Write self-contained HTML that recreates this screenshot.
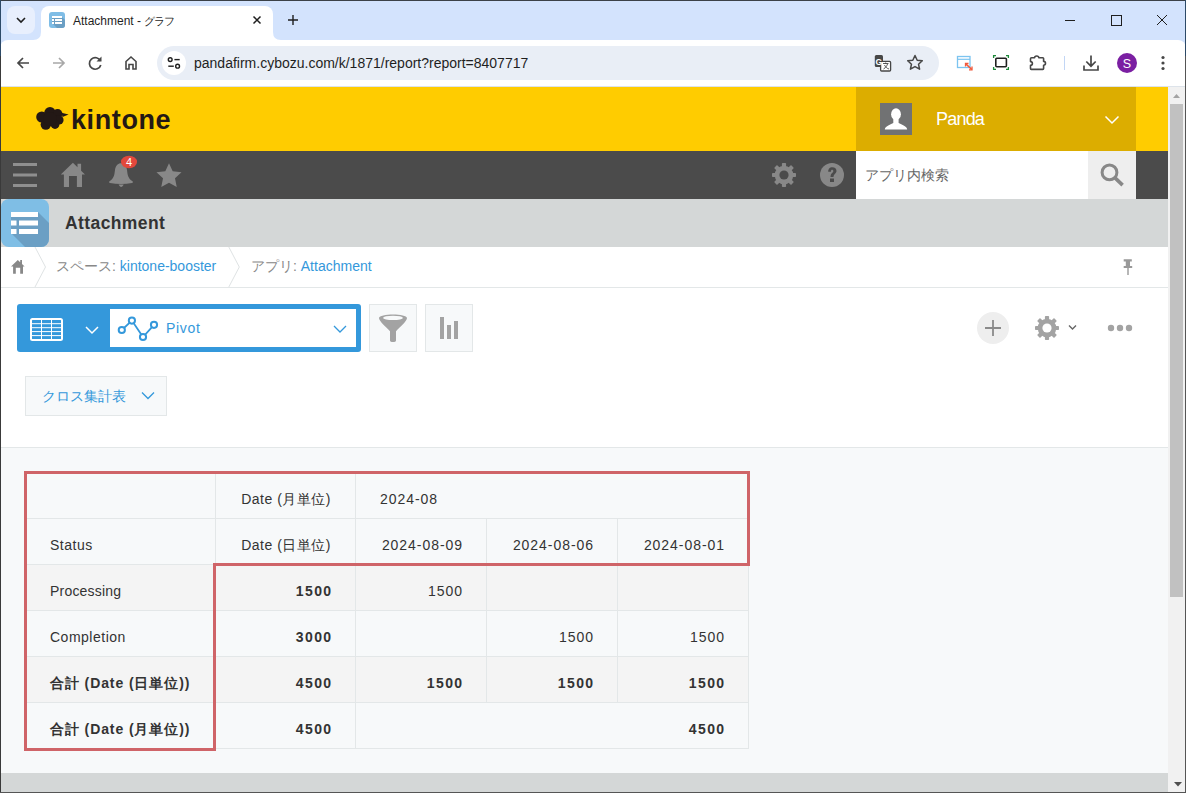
<!DOCTYPE html>
<html><head><meta charset="utf-8">
<style>
*{box-sizing:border-box;margin:0;padding:0}
html,body{width:1186px;height:793px;overflow:hidden;background:#fff;font-family:"Liberation Sans",sans-serif;color:#333}
.a{position:absolute}
svg{position:absolute;overflow:visible}
.tt{font-size:14px;line-height:46px;height:46px;margin-top:4px;letter-spacing:0.5px;color:#333;white-space:nowrap;padding-right:24px}
.b{font-weight:bold}
.n{letter-spacing:0.95px;padding-right:23px}
.b.n{letter-spacing:1.35px;padding-right:22.6px}
.j{letter-spacing:0.9px}
</style></head><body>
<!-- ===== Chrome tab strip ===== -->
<div class="a" style="left:0;top:0;width:1186px;height:48px;background:#d3e3fd"></div>
<div class="a" style="left:7px;top:6px;width:28px;height:28px;border-radius:8px;background:#e8effd"></div>
<svg style="left:0;top:0" width="1186" height="40">
  <path d="M17 18 L21 22 L25 18" fill="none" stroke="#1f1f1f" stroke-width="1.6"/>
</svg>
<!-- active tab -->
<div class="a" style="left:41px;top:6px;width:232px;height:34px;background:#fff;border-radius:8px 8px 0 0"></div>
<svg style="left:0;top:0" width="300" height="41">
  <path d="M33 40 Q41 40 41 32 L41 40 Z" fill="#fff"/>
  <path d="M281 40 Q273 40 273 32 L273 40 Z" fill="#fff"/>
</svg>
<div class="a" style="left:49px;top:12px;width:16px;height:16px;border-radius:3px;background:#7fbde6;overflow:hidden">
  <svg style="left:0;top:0" width="16" height="16"><path d="M3 5 L13 5 L16 8 L16 16 L8 16 L3 11 Z" fill="#6b9fc4"/></svg>
  <div class="a" style="left:3px;top:4px;width:10px;height:2px;background:#fff"></div>
  <div class="a" style="left:3px;top:7px;width:2px;height:2px;background:#fff"></div>
  <div class="a" style="left:6px;top:7px;width:7px;height:2px;background:#fff"></div>
  <div class="a" style="left:3px;top:10px;width:2px;height:2px;background:#fff"></div>
  <div class="a" style="left:6px;top:10px;width:7px;height:2px;background:#fff"></div>
</div>
<div class="a" style="left:73px;top:14px;font-size:12px;line-height:15px;color:#1f1f1f;white-space:nowrap">Attachment - <span style="letter-spacing:-1.2px;font-size:11px">グラフ</span></div>
<svg style="left:0;top:0" width="1186" height="40">
  <path d="M253.5 16.5 L260.5 23.5 M260.5 16.5 L253.5 23.5" stroke="#1f1f1f" stroke-width="1.5"/>
  <path d="M288 20 H298 M293 15 V25" stroke="#1f1f1f" stroke-width="1.4"/>
  <path d="M1065 20.5 H1075" stroke="#1f1f1f" stroke-width="1"/>
  <rect x="1111.5" y="15.5" width="10" height="10" fill="none" stroke="#1f1f1f" stroke-width="1"/>
  <path d="M1157 15 L1167 25 M1167 15 L1157 25" stroke="#1f1f1f" stroke-width="1"/>
</svg>
<!-- ===== Chrome toolbar ===== -->
<div class="a" style="left:0;top:40px;width:1186px;height:47px;background:#fff;border-radius:8px 8px 0 0;border-bottom:1px solid #dde3ea"></div>
<div class="a" style="left:157px;top:46px;width:782px;height:34px;border-radius:17px;background:#e9eef6"></div>
<div class="a" style="left:162px;top:51px;width:24px;height:24px;border-radius:12px;background:#fff"></div>
<div class="a" style="left:194px;top:55px;font-size:14px;line-height:16px;color:#1f1f1f;white-space:nowrap">pandafirm.cybozu.com/k/1871/report?report=8407717</div>
<svg style="left:0;top:40px" width="1186" height="47">
  <!-- back -->
  <path d="M29 23 H18 M23 18 L18 23 L23 28" fill="none" stroke="#474747" stroke-width="1.7"/>
  <!-- forward -->
  <path d="M53 23 H64 M59 18 L64 23 L59 28" fill="none" stroke="#a8a8a8" stroke-width="1.7"/>
  <!-- reload -->
  <path d="M100.5 21 A5.8 5.8 0 1 0 100.8 25" fill="none" stroke="#474747" stroke-width="1.7"/>
  <path d="M101.5 16.5 V21.5 H96.5 Z" fill="#474747"/>
  <!-- home -->
  <path d="M126 29 V21.5 L131 17 L136 21.5 V29 H133 V24.5 H129 V29 Z" fill="none" stroke="#474747" stroke-width="1.6" stroke-linejoin="miter"/>
  <!-- site info -->
  <circle cx="170.2" cy="19.6" r="1.9" fill="none" stroke="#1f1f1f" stroke-width="1.4"/>
  <path d="M174.4 19.6 H179.7" stroke="#1f1f1f" stroke-width="1.4"/>
  <circle cx="177.6" cy="26.2" r="1.9" fill="none" stroke="#1f1f1f" stroke-width="1.4"/>
  <path d="M168.3 26.2 H173.8" stroke="#1f1f1f" stroke-width="1.4"/>
  <!-- translate -->
  <rect x="874.8" y="15" width="8.2" height="12" rx="1.5" fill="#474747"/>
  <rect x="880.6" y="21.4" width="10" height="9.6" rx="1" fill="#fff" stroke="#474747" stroke-width="1.3"/>
  <text x="875.6" y="24.6" font-size="8.5" font-weight="bold" fill="#fff" font-family="Liberation Sans">G</text>
  <path d="M883 23.5 H888.5 M885.7 22.5 V24 M883.5 29 C886 27.5 887 25.5 887.5 24 M884.5 25 C885.5 27 887 28.5 889 29" fill="none" stroke="#474747" stroke-width="0.9"/>
  <!-- star -->
  <path d="M915 15.5 L917.2 20.3 L922.3 20.8 L918.5 24.2 L919.6 29.2 L915 26.6 L910.4 29.2 L911.5 24.2 L907.7 20.8 L912.8 20.3 Z" fill="none" stroke="#474747" stroke-width="1.5" stroke-linejoin="round"/>
  <!-- ext 1 -->
  <rect x="957.5" y="16.5" width="12.5" height="11" fill="#fff" stroke="#7cc4f0" stroke-width="1.3"/>
  <path d="M957.5 19.3 H970" stroke="#7cc4f0" stroke-width="1.2"/>
  <path d="M965.8 23.8 L971.8 29.5" stroke="#f05a3c" stroke-width="1.6"/>
  <path d="M965.5 26.5 V23.5 H968.5 M972 26.5 V29.8 H969" fill="none" stroke="#f05a3c" stroke-width="1.3"/>
  <!-- ext 2 -->
  <rect x="995.8" y="18.2" width="10.6" height="8.6" rx="1" fill="none" stroke="#1f1f1f" stroke-width="1.6"/>
  <path d="M993.6 18 V15.6 H996 M1006 15.6 H1008.4 V18 M1008.4 27 V29.4 H1006 M996 29.4 H993.6 V27" fill="none" stroke="#1e8a3a" stroke-width="1.3"/>
  <!-- puzzle -->
  <path d="M1031.5 17.8 H1034.6 A2.1 1.8 0 0 1 1038.8 17.8 H1042.8 A0.8 0.8 0 0 1 1043.6 18.6 V21.4 A1.9 1.9 0 0 1 1043.6 25.2 V28.6 A0.8 0.8 0 0 1 1042.8 29.4 H1031.3 A0.8 0.8 0 0 1 1030.5 28.6 V25.4 A1.9 1.9 0 0 0 1030.5 21.6 V18.8 A1 1 0 0 1 1031.5 17.8 Z" fill="none" stroke="#474747" stroke-width="1.6" stroke-linejoin="round"/>
  <!-- separator -->
  <path d="M1064.5 16 V30" stroke="#c2d6f5" stroke-width="1"/>
  <!-- download -->
  <path d="M1091 15.5 V26 M1086.3 21.5 L1091 26.2 L1095.7 21.5 M1084 25.5 V30 H1098 V25.5" fill="none" stroke="#474747" stroke-width="1.7"/>
  <!-- avatar -->
  <circle cx="1127" cy="23" r="10" fill="#7b1fa2"/>
  <text x="1127" y="27.6" font-size="12.5" fill="#fff" text-anchor="middle" font-family="Liberation Sans">S</text>
  <!-- menu -->
  <circle cx="1163" cy="17.5" r="1.6" fill="#474747"/>
  <circle cx="1163" cy="23" r="1.6" fill="#474747"/>
  <circle cx="1163" cy="28.5" r="1.6" fill="#474747"/>
</svg>

<!-- ===== kintone header ===== -->
<div class="a" style="left:1px;top:87px;width:1167px;height:64px;background:#ffcc00"></div>
<svg style="left:0;top:0" width="200" height="160">
  <g fill="#231815">
  <circle cx="41.8" cy="117" r="5.6"/>
  <circle cx="50" cy="112.8" r="5.8"/>
  <circle cx="57.6" cy="113.8" r="4.8"/>
  <circle cx="59" cy="120" r="4.6"/>
  <circle cx="55" cy="124.5" r="4.4"/>
  <circle cx="45.8" cy="124.6" r="5.2"/>
  <circle cx="50" cy="119" r="7"/>
  <path d="M61.5 112.8 L68.6 114.4 L62.5 117 Z"/>
  </g>
</svg>
<div class="a" style="left:71px;top:103px;font-size:27px;line-height:34px;font-weight:bold;color:#231815;letter-spacing:0.6px">kintone</div>
<div class="a" style="left:856px;top:87px;width:280px;height:64px;background:#dcad00"></div>
<div class="a" style="left:880px;top:103px;width:32px;height:32px;background:#717273;overflow:hidden">
  <svg style="left:0;top:0" width="32" height="32"><ellipse cx="16" cy="11.2" rx="4.9" ry="5.9" fill="#fff"/><path d="M13.3 15 H18.6 V20 C23 22 27 23.5 27.2 26.5 H4.8 C5 23.5 9 22 13.3 20 Z" fill="#fff"/></svg>
</div>
<div class="a" style="left:936px;top:109px;font-size:18px;line-height:20px;color:#fff;letter-spacing:-0.8px">Panda</div>
<svg style="left:0;top:87px" width="1186" height="64">
  <path d="M1105.5 29.5 L1112 36 L1118.5 29.5" fill="none" stroke="#fff" stroke-width="1.5"/>
</svg>

<!-- ===== nav bar ===== -->
<div class="a" style="left:1px;top:151px;width:1167px;height:48px;background:#4b4b4b"></div>
<svg style="left:0;top:151px" width="1186" height="48">
  <rect x="13" y="12" width="24" height="3" fill="#8f8f8f"/>
  <rect x="13" y="22.5" width="24" height="3" fill="#8f8f8f"/>
  <rect x="13" y="33" width="24" height="3" fill="#8f8f8f"/>
  <!-- home -->
  <path d="M60.8 23.6 L72.9 11.8 L77.5 16.3 V12.8 H81.1 V19.8 L85 23.6 H82 V36 H76.9 V24.9 H69 V36 H63.9 V23.6 Z" fill="#888"/>
  <!-- bell -->
  <path d="M121 12.3 C124 12.3 126.5 15 127 19 C127.7 25 128.3 27.5 132.5 30.2 C133.2 30.8 133 31.8 132 32.1 C125 33.3 117 33.3 110 32.1 C109 31.8 108.8 30.8 109.5 30.2 C113.7 27.5 114.3 25 115 19 C115.5 15 118 12.3 121 12.3 Z" fill="#888"/>
  <path d="M118.6 33.6 H123.7 C123 35.3 122 35.9 121.15 35.9 C120.3 35.9 119.3 35.3 118.6 33.6 Z" fill="#888"/>
  <ellipse cx="129" cy="11" rx="8" ry="6.2" fill="#e2483c"/>
  <text x="129" y="15" font-size="11" fill="#fff" text-anchor="middle" font-family="Liberation Sans">4</text>
  <!-- star -->
  <path d="M169.00 12.20 L172.70 20.26 L181.52 21.29 L174.99 27.31 L176.74 36.01 L169.00 31.66 L161.26 36.01 L163.01 27.31 L156.48 21.29 L165.30 20.26 Z" fill="#888"/>
  <!-- gear -->
  <g transform="translate(784,24)" fill="#888">
    <circle r="9.3"/>
    <rect x="-2.1" y="-12" width="4.2" height="24" rx="0.8"/>
    <rect x="-2.1" y="-12" width="4.2" height="24" rx="0.8" transform="rotate(45)"/>
    <rect x="-2.1" y="-12" width="4.2" height="24" rx="0.8" transform="rotate(90)"/>
    <rect x="-2.1" y="-12" width="4.2" height="24" rx="0.8" transform="rotate(135)"/>
    <circle r="4.6" fill="#4b4b4b"/>
  </g>
  <!-- help -->
  <circle cx="832" cy="24" r="12" fill="#888"/>
  <path d="M828.2 20.8 C828.2 17.5 830 16.3 832.3 16.3 C835 16.3 836.5 18 836.5 20 C836.5 22.5 833.5 23 833.5 26 H830.5 C830.5 22 833.3 22 833.3 20.3 C833.3 19.3 832.8 18.8 832.1 18.8 C831.4 18.8 831 19.4 831 20.8 Z" fill="#4b4b4b"/>
  <rect x="830" y="27.5" width="4" height="3.5" fill="#4b4b4b"/>
</svg>
<div class="a" style="left:856px;top:151px;width:232px;height:48px;background:#fff"></div>
<div class="a" style="left:865px;top:167px;font-size:14px;line-height:17px;color:#666;white-space:nowrap">アプリ内検索</div>
<div class="a" style="left:1088px;top:151px;width:48px;height:48px;background:#eeeeee"></div>
<svg style="left:0;top:151px" width="1186" height="48">
  <circle cx="1109.5" cy="21.4" r="7.4" fill="none" stroke="#888" stroke-width="3"/>
  <path d="M1114.5 26.4 L1122.6 34.1" stroke="#888" stroke-width="3.6"/>
</svg>

<!-- ===== title bar ===== -->
<div class="a" style="left:1px;top:199px;width:1167px;height:48px;background:#d4d7d7"></div>
<div class="a" style="left:1px;top:199px;width:48px;height:48px;border-radius:8px;background:#7fbee5;overflow:hidden">
  <svg style="left:0;top:0" width="48" height="48">
    <path d="M10 13 L37 13 L48 24 L48 48 L24 48 L10 34 Z" fill="#6b9fc4"/>
    <rect x="10" y="13" width="27" height="5" fill="#fff"/>
    <rect x="10" y="21.5" width="5.5" height="5" fill="#fff"/>
    <rect x="18" y="21.5" width="19" height="5" fill="#fff"/>
    <rect x="10" y="30" width="5.5" height="5" fill="#fff"/>
    <rect x="18" y="30" width="19" height="5" fill="#fff"/>
  </svg>
</div>
<div class="a" style="left:65px;top:213px;font-size:17.5px;line-height:20px;font-weight:bold;color:#333;letter-spacing:0.4px">Attachment</div>

<!-- ===== breadcrumb ===== -->
<div class="a" style="left:1px;top:247px;width:1167px;height:41px;background:#fff;border-bottom:1px solid #e3e7e8"></div>
<svg style="left:0;top:247px" width="1186" height="41">
  <path d="M11 19.6 L17.8 13 L20.2 15.3 V13 H22 V17 L24.6 19.6 H23 V26.8 H20.2 V20.7 H15.8 V26.8 H13.1 V19.6 Z" fill="#888"/>
  <path d="M35 0 L45.5 20 L35 40" fill="none" stroke="#dfe3e4" stroke-width="1"/>
  <path d="M228.8 0 L239.3 20 L228.8 40" fill="none" stroke="#dfe3e4" stroke-width="1"/>
  <path d="M1123.7 12.3 H1131.8 V14.5 H1130 V19 H1132.2 V21 H1123.7 V19 H1125.8 V14.5 H1123.7 Z" fill="#999"/><rect x="1127.3" y="21" width="1.4" height="7" fill="#999"/>
</svg>
<div class="a" style="left:56px;top:258px;font-size:14px;line-height:17px;white-space:nowrap;color:#888">スペース: <span style="color:#3498db">kintone-booster</span></div>
<div class="a" style="left:251px;top:258px;font-size:14px;line-height:17px;white-space:nowrap;color:#888">アプリ: <span style="color:#3498db">Attachment</span></div>

<!-- ===== toolbar ===== -->
<div class="a" style="left:17px;top:304px;width:344px;height:48px;background:#3498db;border-radius:3px"></div>
<div class="a" style="left:110px;top:309px;width:246px;height:38px;background:#fff"></div>
<div class="a" style="left:166px;top:320px;font-size:14px;line-height:17px;color:#3498db;letter-spacing:0.7px">Pivot</div>
<svg style="left:0;top:304px" width="1186" height="48">
  <!-- table icon -->
  <rect x="31" y="15" width="31" height="21" rx="1.5" fill="none" stroke="#fff" stroke-width="2"/>
  <path d="M31 19.7 H62 M31 23.7 H62 M31 27.6 H62 M31 31.6 H62 M41.5 15 V36 M51.5 15 V36" stroke="#fff" stroke-width="1"/>
  <path d="M86 23 L92 29 L98 23" fill="none" stroke="#fff" stroke-width="1.5"/>
  <!-- line chart icon -->
  <path d="M121.8 26 L131.9 16.6 L143 33 L154 20.8" fill="none" stroke="#3498db" stroke-width="1.8"/>
  <circle cx="121.8" cy="26" r="3.1" fill="#fff" stroke="#3498db" stroke-width="2"/>
  <circle cx="131.9" cy="16.6" r="3.1" fill="#fff" stroke="#3498db" stroke-width="2"/>
  <circle cx="143" cy="33" r="3.1" fill="#fff" stroke="#3498db" stroke-width="2"/>
  <circle cx="154" cy="20.8" r="3.1" fill="#fff" stroke="#3498db" stroke-width="2"/>
  <path d="M334 22 L340 28 L346 22" fill="none" stroke="#3498db" stroke-width="1.3"/>
</svg>
<div class="a" style="left:369px;top:304px;width:48px;height:48px;background:#f7f9fa;border:1px solid #e3e7e8"></div>
<div class="a" style="left:425px;top:304px;width:48px;height:48px;background:#f7f9fa;border:1px solid #e3e7e8"></div>
<svg style="left:0;top:304px" width="1186" height="48">
  <!-- funnel -->
  <path d="M379 14 C379 9.2 407 9.2 407 14 C407 17 400 23 396 27.3 V36.6 C396 38.6 390 38.6 390 36.6 V27.3 C386 23 379 17 379 14 Z" fill="#a3a3a3"/>
  <ellipse cx="393" cy="13.9" rx="9.9" ry="2.2" fill="#f7f9fa"/>
  <!-- bars -->
  <rect x="440" y="13" width="4" height="22" fill="#a3a3a3"/>
  <rect x="447" y="21" width="4" height="14" fill="#a3a3a3"/>
  <rect x="454" y="17" width="4" height="18" fill="#a3a3a3"/>
  <!-- plus circle -->
  <circle cx="993" cy="24" r="16" fill="#eeeeee"/>
  <path d="M985 24 H1001 M993 16 V32" stroke="#8a8a8a" stroke-width="1.8"/>
  <!-- gear -->
  <g transform="translate(1047,24)" fill="#a3a3a3">
    <circle r="9.3"/>
    <rect x="-2.1" y="-12" width="4.2" height="24" rx="0.8"/>
    <rect x="-2.1" y="-12" width="4.2" height="24" rx="0.8" transform="rotate(45)"/>
    <rect x="-2.1" y="-12" width="4.2" height="24" rx="0.8" transform="rotate(90)"/>
    <rect x="-2.1" y="-12" width="4.2" height="24" rx="0.8" transform="rotate(135)"/>
    <circle r="4.6" fill="#fff"/>
  </g>
  <path d="M1069 21.5 L1072.5 25 L1076 21.5" fill="none" stroke="#666" stroke-width="1.4"/>
  <circle cx="1111" cy="24" r="3.2" fill="#a3a3a3"/>
  <circle cx="1120" cy="24" r="3.2" fill="#a3a3a3"/>
  <circle cx="1129" cy="24" r="3.2" fill="#a3a3a3"/>
</svg>
<div class="a" style="left:25px;top:376px;width:142px;height:40px;background:#f7f9fa;border:1px solid #e3e7e8"></div>
<div class="a" style="left:42px;top:388px;font-size:14px;line-height:17px;color:#3498db;white-space:nowrap">クロス集計表</div>
<svg style="left:0;top:376px" width="200" height="40">
  <path d="M142 16.5 L148 22.5 L154 16.5" fill="none" stroke="#3498db" stroke-width="1.3"/>
</svg>

<!-- ===== content ===== -->
<div class="a" style="left:1px;top:447px;width:1167px;height:326px;background:#f7f9fa;border-top:1px solid #e3e7e8"></div>
<div class="a" style="left:1px;top:773px;width:1167px;height:20px;background:#d4d7d7"></div>
<!-- ===== table ===== -->
<div class="a" style="left:25px;top:472px;width:724px;height:277px;border-right:1px solid #e3e7e8;border-bottom:1px solid #e3e7e8"></div>
<div class="a" style="left:25px;top:564px;width:723px;height:46px;background:#f4f4f4"></div>
<div class="a" style="left:25px;top:656px;width:723px;height:46px;background:#f4f4f4"></div>
<svg style="left:0;top:0" width="1186" height="793">
  <g stroke="#e3e7e8" stroke-width="1" fill="none">
    <path d="M25 518.5 H748 M25 564.5 H748 M25 610.5 H748 M25 656.5 H748 M25 702.5 H748"/>
    <path d="M215.5 472 V749 M355.5 472 V749 M486.5 518 V703 M617.5 518 V703"/>
  </g>
  <path d="M25.5 472.5 H748.5 V564.5 H214.5 V749.5 H25.5 Z" fill="none" stroke="#cf6468" stroke-width="3"/>
</svg>
<div class="a tt" style="left:215px;top:472px;width:140px;text-align:right">Date (月単位)</div>
<div class="a tt n" style="left:380px;top:472px">2024-08</div>
<div class="a tt" style="left:50px;top:518px">Status</div>
<div class="a tt" style="left:215px;top:518px;width:140px;text-align:right">Date (日単位)</div>
<div class="a tt n" style="left:355px;top:518px;width:131px;text-align:right">2024-08-09</div>
<div class="a tt n" style="left:486px;top:518px;width:131px;text-align:right">2024-08-06</div>
<div class="a tt n" style="left:617px;top:518px;width:131px;text-align:right">2024-08-01</div>
<div class="a tt" style="left:50px;top:564px;letter-spacing:0.2px">Processing</div>
<div class="a tt n b" style="left:215px;top:564px;width:140px;text-align:right">1500</div>
<div class="a tt n" style="left:355px;top:564px;width:131px;text-align:right">1500</div>
<div class="a tt" style="left:50px;top:610px">Completion</div>
<div class="a tt n b" style="left:215px;top:610px;width:140px;text-align:right">3000</div>
<div class="a tt n" style="left:486px;top:610px;width:131px;text-align:right">1500</div>
<div class="a tt n" style="left:617px;top:610px;width:131px;text-align:right">1500</div>
<div class="a tt j b" style="left:50px;top:656px">合計 (Date (日単位))</div>
<div class="a tt n b" style="left:215px;top:656px;width:140px;text-align:right">4500</div>
<div class="a tt n b" style="left:355px;top:656px;width:131px;text-align:right">1500</div>
<div class="a tt n b" style="left:486px;top:656px;width:131px;text-align:right">1500</div>
<div class="a tt n b" style="left:617px;top:656px;width:131px;text-align:right">1500</div>
<div class="a tt j b" style="left:50px;top:702px">合計 (Date (月単位))</div>
<div class="a tt n b" style="left:215px;top:702px;width:140px;text-align:right">4500</div>
<div class="a tt n b" style="left:355px;top:702px;width:393px;text-align:right">4500</div>


<!-- ===== scrollbar ===== -->
<div class="a" style="left:1168px;top:87px;width:17px;height:706px;background:#f1f1f1"></div>
<div class="a" style="left:1170px;top:104px;width:13px;height:493px;background:#c1c1c1"></div>
<svg style="left:0;top:0" width="1186" height="793">
  <path d="M1173 98 L1176.5 94 L1180 98 Z" fill="#a3a3a3"/>
  <path d="M1174 782 L1178 786.5 L1182 782 Z" fill="#505050"/>
</svg>

<!-- window border -->
<div class="a" style="left:0;top:0;width:1186px;height:1px;background:#3b4148"></div>
<div class="a" style="left:0;top:0;width:1px;height:56px;background:#2d4a68"></div><div class="a" style="left:0;top:56px;width:1px;height:737px;background:#3a3a3a"></div>
<div class="a" style="left:1185px;top:0;width:1px;height:56px;background:#2d4a68"></div><div class="a" style="left:1185px;top:56px;width:1px;height:737px;background:#555"></div>
<div class="a" style="left:0;top:792px;width:1186px;height:1px;background:#555"></div>
</body></html>
